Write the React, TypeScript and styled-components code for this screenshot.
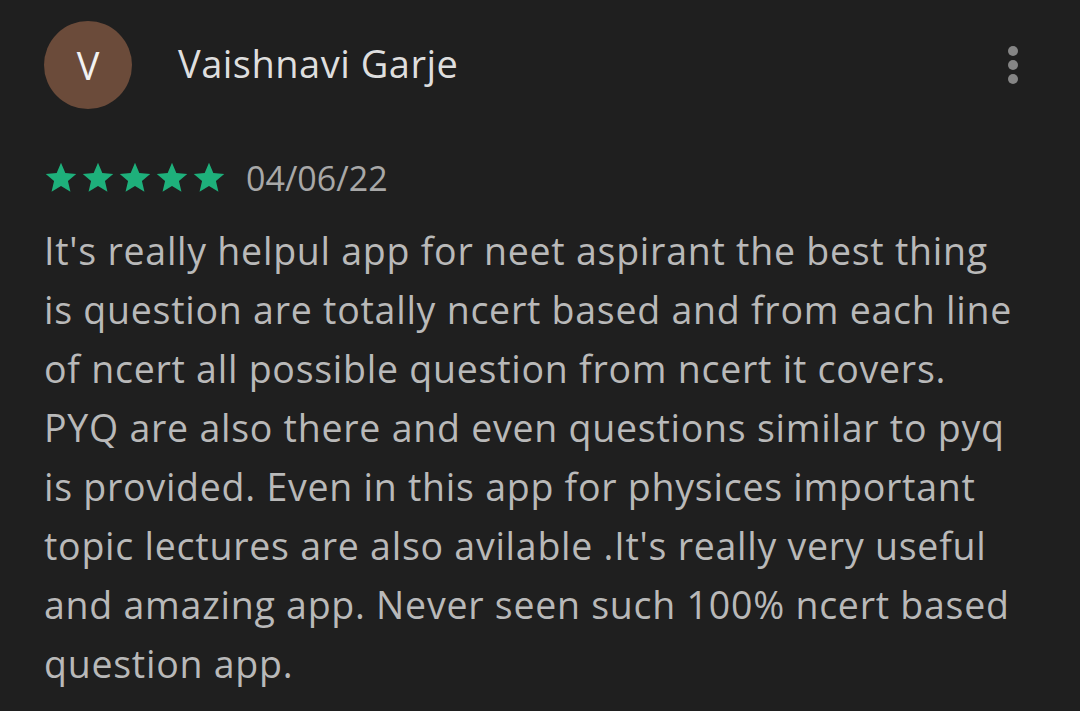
import React from "react";
import styled, { createGlobalStyle } from "styled-components";

const Global = createGlobalStyle`
  html, body { margin: 0; padding: 0; background: #1f1f1f; }
  body { font-family: "Open Sans", Roboto, sans-serif; }
`;

const Page = styled.div`
  width: 1080px;
  height: 711px;
  background: #1f1f1f;
  box-sizing: border-box;
  padding: 21px 0 0 44px;
  overflow: hidden;
`;

const Header = styled.div`
  display: flex;
  align-items: center;
  padding-right: 62px;
`;

const Avatar = styled.div`
  width: 88px;
  height: 88px;
  border-radius: 50%;
  background: #6b4b3a;
  color: #f2f2f2;
  display: flex;
  align-items: center;
  justify-content: center;
  font-size: 38px;
  font-weight: 400;
`;

const Name = styled.div`
  margin-left: 46px;
  margin-bottom: 4px;
  flex: 1;
  color: #dedede;
  font-size: 38px;
  letter-spacing: 0.5px;
`;

const Dots = styled.div`
  display: flex;
  flex-direction: column;
  gap: 4px;
`;

const Dot = styled.span`
  width: 10px;
  height: 10px;
  border-radius: 50%;
  background: #858585;
`;

const RatingRow = styled.div`
  display: flex;
  align-items: center;
  margin-top: 46px;
`;

const Stars = styled.div`
  display: flex;
  gap: 3px;
`;

const DateText = styled.span`
  margin-left: 20px;
  color: #a8a8a8;
  font-size: 34px;
`;

const Body = styled.div`
  margin-top: 20px;
  color: #b9b9b9;
  font-size: 37.5px;
  line-height: 59px;
  letter-spacing: 0.75px;
`;

const Line = styled.div`
  white-space: nowrap;
`;

const Star = () => (
  <svg width="34" height="32" viewBox="0 0 24 22.5" preserveAspectRatio="none">
    <path
      fill="#1eb07b"
      d="M12 0.6l3.05 7.1 7.7.65-5.85 5.05 1.77 7.5L12 16.9l-6.67 4 1.77-7.5L1.25 8.35l7.7-.65z"
    />
  </svg>
);

const lines = [
  "It's really helpul app for neet aspirant the best thing",
  "is question are totally ncert based and from each line",
  "of ncert all possible question from ncert it covers.",
  "PYQ are also there and even questions similar to pyq",
  "is provided. Even in this app for physices important",
  "topic lectures are also avilable .It's really very useful",
  "and amazing app. Never seen such 100% ncert based",
  "question app.",
];

export default function App() {
  return (
    <Page>
      <Global />
      <Header>
        <Avatar>V</Avatar>
        <Name>Vaishnavi Garje</Name>
        <Dots>
          <Dot />
          <Dot />
          <Dot />
        </Dots>
      </Header>
      <RatingRow>
        <Stars>
          {[0, 1, 2, 3, 4].map((i) => (
            <Star key={i} />
          ))}
        </Stars>
        <DateText>04/06/22</DateText>
      </RatingRow>
      <Body>
        {lines.map((l, i) => (
          <Line key={i}>{l}</Line>
        ))}
      </Body>
    </Page>
  );
}
